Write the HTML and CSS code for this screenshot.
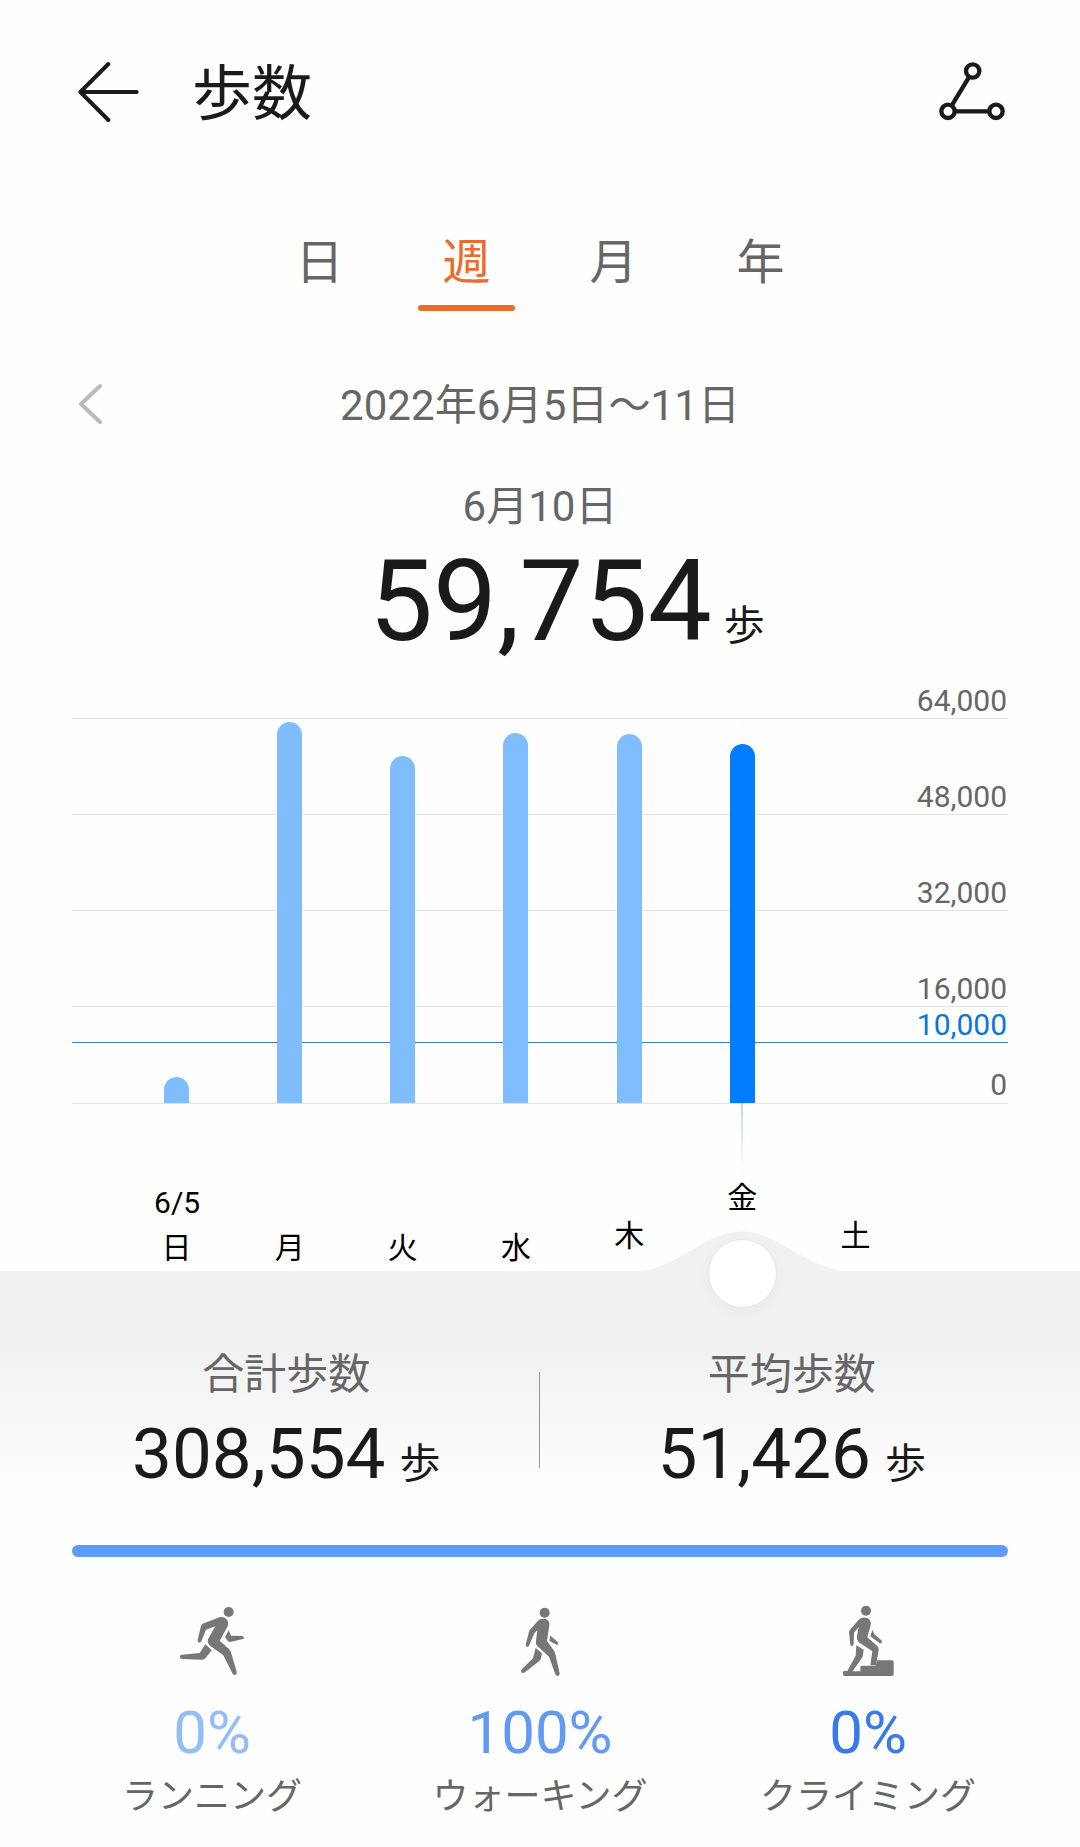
FILE: index.html
```html
<!DOCTYPE html>
<html lang="ja">
<head>
  <meta charset="UTF-8">
  <meta name="viewport" content="width=device-width, initial-scale=1.0">
  <title>歩数</title>
  <link rel="stylesheet" href="styles.css">
</head>
<body>
  <header class="header">
    <svg class="header-icon" viewBox="36 48 216 216">
      <path d="M145 72 61 156l84 84M61 156h169" fill="none" stroke="#1a1a1a" stroke-width="12" stroke-linecap="round" stroke-linejoin="round"/>
    </svg>
    <h1>歩数</h1>
    <svg class="header-icon" viewBox="78 48 216 216">
      <g fill="none" stroke="#1a1a1a" stroke-width="13">
        <circle cx="188" cy="93" r="20"/>
        <circle cx="114" cy="214" r="20"/>
        <circle cx="258" cy="214" r="20"/>
        <path d="M178 110 125 197M134 214h104"/>
      </g>
    </svg>
  </header>

  <nav class="tabs">
    <div class="tab">日</div>
    <div class="tab active">週</div>
    <div class="tab">月</div>
    <div class="tab">年</div>
  </nav>

  <div class="date-row">
    <svg class="prev" viewBox="0 0 36 48">
      <path d="M28 6 9 24l19 18" fill="none" stroke="#bababa" stroke-width="4" stroke-linecap="round" stroke-linejoin="round"/>
    </svg>
    <span>2022年6月5日～11日</span>
  </div>

  <div class="selected-day">6月10日</div>
  <div class="selected-steps"><span class="number">59,754</span><span class="unit">歩</span></div>

  <div class="chart">
    <div class="grid-lines">
      <div class="grid-line">64,000</div>
      <div class="grid-line">48,000</div>
      <div class="grid-line">32,000</div>
      <div class="grid-line">16,000</div>
      <div class="grid-line">0</div>
    </div>
    <div class="goal">10,000</div>
    <div class="cursor"></div>
    <div class="bars">
      <div class="col"><div class="bar" style="height: 26px"></div></div>
      <div class="col"><div class="bar" style="height: 381px"></div></div>
      <div class="col"><div class="bar" style="height: 347px"></div></div>
      <div class="col"><div class="bar" style="height: 370px"></div></div>
      <div class="col"><div class="bar" style="height: 369px"></div></div>
      <div class="col"><div class="bar selected" style="height: 359px"></div></div>
      <div class="col"></div>
    </div>
  </div>

  <div class="days">
    <div class="day"><span class="day-date">6/5</span>日</div>
    <div class="day">月</div>
    <div class="day">火</div>
    <div class="day">水</div>
    <div class="day near">木</div>
    <div class="day current">金</div>
    <div class="day near">土</div>
  </div>

  <section class="summary">
    <svg class="bump" viewBox="-24 0 672 122">
      <path d="M-24 122C118 122 194 1 312 1s194 121 336 121z" fill="#f1f1f1"/>
    </svg>
    <div class="knob"></div>
    <div class="total">
      <div class="total-label">合計歩数</div>
      <div class="total-value"><span class="number">308,554</span><span class="unit">歩</span></div>
    </div>
    <div class="divider"></div>
    <div class="total">
      <div class="total-label">平均歩数</div>
      <div class="total-value"><span class="number">51,426</span><span class="unit">歩</span></div>
    </div>
  </section>

  <div class="ratio-bar"></div>

  <section class="activities">
    <div class="activity running">
      <svg viewBox="36 0 240 300" fill="#777">
        <circle cx="206" cy="66" r="15"/>
        <path d="M128 101 178 82Q190 79 199 87 207 95 203 109L179 152 206 176Q211 180 213 187L230 245Q231 254 224 255 219 255 217 250L190 196 150 167Q141 160 144 148L166 109 138 119 124 154Q121 160 115 157 112 155 113 149L123 108Q124 103 128 101z"/>
        <path d="M206 121 213 137 247 138Q253 140 252 145 251 148 246 148L210 156Q206 156 203 152L195 142z"/>
        <path d="M136 163 155 181 137 204Q133 209 126 209L67 207Q59 206 59 200 60 194 67 194L119 189z"/>
      </svg>
      <div class="percent">0%</div>
      <div class="activity-name">ランニング</div>
    </div>
    <div class="activity walking">
      <svg viewBox="0 0 240 300" fill="#777">
        <circle cx="134" cy="68" r="15"/>
        <path d="M90 119 114 92Q123 84 137 87 149 91 148 105L141 153 160 179Q165 185 166 193L179 250Q179 257 173 258 168 258 166 253L147 200 112 168Q106 162 108 152L112 121 103 130 87 167Q83 173 78 169 76 167 78 160L87 125Q88 121 90 119z"/>
        <path d="M151 137 172 155Q177 159 174 163 171 165 167 163L148 152z"/>
        <path d="M107 174 126 190 123 205Q122 210 118 213L75 247Q69 252 64 247 61 242 66 237L99 205z"/>
      </svg>
      <div class="percent">100%</div>
      <div class="activity-name">ウォーキング</div>
    </div>
    <div class="activity climbing">
      <svg viewBox="24 0 240 300" fill="#777">
        <circle cx="138" cy="62" r="15"/>
        <path d="M90 119 116 89Q127 79 142 84 155 91 152 106L142 142 171 167Q177 172 176 180L168 226H151L157 184 119 158Q109 151 111 139L116 111 102 128 101 163Q100 168 95 168 91 168 91 163L87 127Q87 122 90 119z"/>
        <path d="M157 119 163 133 184 151Q188 156 185 159 181 161 177 158L151 139z"/>
        <path d="M109 166 131 179 128 200 98 244H121V232Q121 227 126 227H167L172 211H216Q221 211 221 216V253Q221 258 216 258H74Q69 258 69 253V247Q69 243 74 243H82L107 197z"/>
      </svg>
      <div class="percent">0%</div>
      <div class="activity-name">クライミング</div>
    </div>
  </section>
</body>
</html>
```

FILE: styles.css
```css
* {
  box-sizing: border-box;
  margin: 0;
  padding: 0;
}

body {
  font-family: Roboto, 'Noto Sans CJK JP', sans-serif;
  background: #fefefe;
  color: #1a1a1a;
  width: 1080px;
  height: 1847px;
  overflow: hidden;
}

.header {
  display: flex;
  align-items: center;
  height: 184px;
  padding: 0 72px;
}

.header h1 {
  flex: 1;
  margin-left: 48px;
  padding-top: 6px;
  font-size: 60px;
  font-weight: 400;
  line-height: 80px;
}

.header-icon {
  width: 72px;
  height: 72px;
}

.tabs {
  display: flex;
  justify-content: center;
  height: 191px;
  padding-top: 46px;
}

.tab {
  display: flex;
  flex-direction: column;
  align-items: center;
  width: 147px;
  font-size: 48px;
  line-height: 66px;
  color: #666;
}

.tab.active {
  color: #e96b2d;
}

.tab.active::after {
  content: '';
  width: 97px;
  height: 6px;
  margin-top: 9px;
  border-radius: 3px;
  background: #e96b2d;
}

.date-row {
  display: flex;
  align-items: center;
  height: 61px;
  padding: 0 72px;
  font-size: 42px;
  line-height: 61px;
  color: #666;
}

.date-row span {
  flex: 1;
  margin-right: 36px;
  text-align: center;
  letter-spacing: 0.1px;
}

.prev {
  width: 36px;
  height: 48px;
  margin-bottom: 3px;
}

.selected-day {
  margin-top: 41px;
  font-size: 42px;
  line-height: 60px;
  text-align: center;
  color: #666;
}

.selected-steps {
  display: flex;
  align-items: baseline;
  height: 120px;
  margin-top: 4px;
  padding-left: 369px;
  font-size: 114px;
  line-height: 120px;
}

.unit {
  margin-left: 12px;
  font-size: 41px;
}

/* chart */
.chart {
  position: relative;
  display: grid;
  height: 435px;
  margin: 8px 72px 0;
}

.grid-lines,
.bars {
  grid-area: 1 / 1;
}

.grid-line {
  display: flex;
  justify-content: flex-end;
  align-items: flex-end;
  height: 96px;
  padding-right: 1px;
  border-bottom: 1px solid #e3e3e3;
  font-size: 30px;
  line-height: 34px;
  color: #666;
}

.grid-line:first-child {
  height: 50px;
}

.grid-line:last-child {
  height: 97px;
  padding-bottom: 1px;
}

.goal {
  position: absolute;
  top: 339px;
  left: 0;
  width: 100%;
  padding-right: 1px;
  border-bottom: 1px solid #3b80bd;
  font-size: 30px;
  line-height: 34px;
  text-align: right;
  color: #0a76d8;
}

.cursor {
  position: absolute;
  top: 50px;
  left: 669px;
  width: 2px;
  height: 454px;
  background: linear-gradient(rgba(70, 145, 195, 0), rgba(70, 145, 195, 0.4) 50%, rgba(70, 145, 195, 0.36) 84%, rgba(70, 145, 195, 0));
}

.bars {
  display: flex;
  align-items: flex-end;
  padding: 0 96px 1px 48px;
  z-index: 1;
}

.col {
  flex: 1;
  display: flex;
  justify-content: center;
}

.bar {
  width: 25px;
  border-radius: 12.5px 12.5px 0 0;
  background: #80bdff;
}

.bar.selected {
  background: #007dff;
}

.days {
  display: flex;
  align-items: flex-end;
  height: 167px;
  padding: 0 168px 4px 120px;
  font-size: 30px;
  line-height: 38px;
  color: #000;
}

.day {
  flex: 1;
  display: flex;
  flex-direction: column;
  align-items: center;
}

.day-date {
  margin-bottom: 7px;
  padding-left: 1px;
}

.day.near {
  padding-bottom: 12px;
}

.day.current {
  padding-bottom: 50px;
}

/* totals */
.summary {
  position: relative;
  display: flex;
  height: 274px;
  padding: 74px 36px 0 34px;
  background: linear-gradient(#f1f1f1 75px, #fefefe 220px);
}

.bump {
  position: absolute;
  top: -40px;
  left: 630px;
  width: 224px;
  height: 41px;
}

.knob {
  position: absolute;
  top: -31px;
  left: 709px;
  width: 67px;
  height: 67px;
  border-radius: 50%;
  background: #fff;
  box-shadow: 0 0 2px rgba(0, 0, 0, 0.08), 0 4px 14px rgba(0, 0, 0, 0.04);
}

.total {
  flex: 1;
  text-align: center;
}

.total-label {
  font-size: 42px;
  line-height: 60px;
  color: #666;
}

.total-value {
  display: flex;
  justify-content: center;
  align-items: baseline;
  margin-top: 5px;
  font-size: 71px;
  line-height: 88px;
}

.total-value .unit {
  margin-left: 14px;
}

.divider {
  width: 1px;
  height: 96px;
  margin-top: 27px;
  background: #979797;
}

.ratio-bar {
  height: 12px;
  margin: 0 72px;
  border-radius: 6px;
  background: #5e9aff;
}

/* activity breakdown */
.activities {
  display: flex;
  padding: 33px 48px 0;
}

.activity {
  flex: 1;
  text-align: center;
}

.activity svg {
  display: block;
  width: 80px;
  height: 100px;
  margin: 0 auto;
}

.percent {
  margin-top: 8px;
  font-size: 60px;
  line-height: 70px;
}

.running .percent {
  color: #93bdf7;
}

.walking .percent {
  color: #6299f1;
}

.climbing .percent {
  color: #377aea;
}

.activity-name {
  margin-top: 5px;
  font-size: 36px;
  line-height: 48px;
  color: #666;
}
```
